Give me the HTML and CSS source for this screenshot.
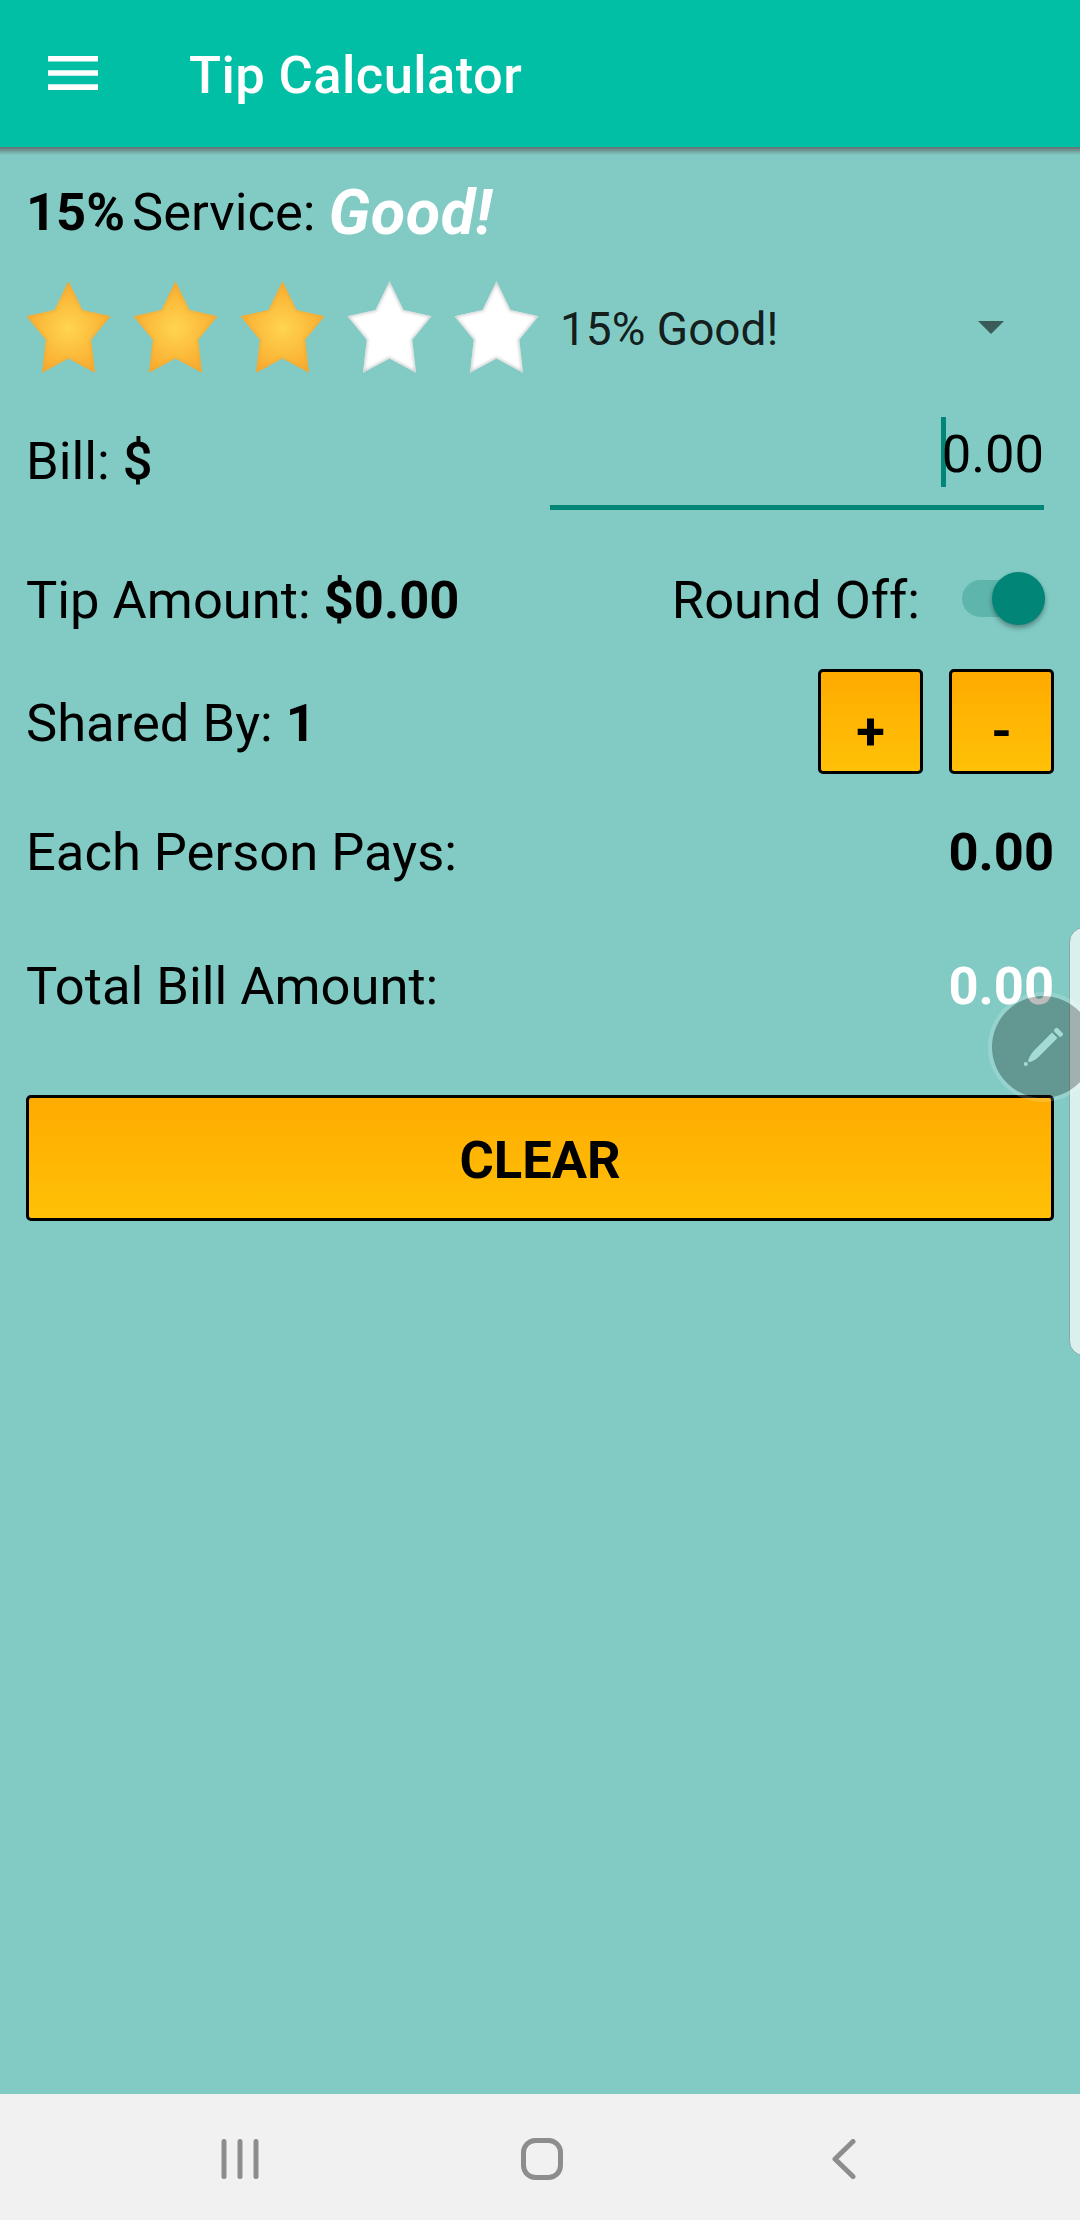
FILE: index.html
```html
<!DOCTYPE html>
<html lang="en">
<head>
<meta charset="utf-8">
<title>Tip Calculator</title>
<link rel="stylesheet" href="styles.css">
</head>
<body>
<div class="app">
  <header class="toolbar">
    <svg class="menu-icon" width="50" height="34" viewBox="0 0 50 34" fill="#fff"><path d="M0 0h50v5.5H0zM0 14.2h50v5.5H0zM0 28.3h50v5.7H0z"/></svg>
    <h1 class="title">Tip Calculator</h1>
  </header>
  <main class="content">
    <div class="row row-service">
      <b class="percent">15%</b><span class="service">Service:</span><em class="quality">Good!</em>
    </div>
    <div class="row row-rating">
      <svg class="stars" width="524" height="110" viewBox="0 0 524 110">
        <defs>
          <radialGradient id="gold" gradientUnits="userSpaceOnUse" cx="42.5" cy="47" r="50"><stop offset="0" stop-color="#ffd54f"/><stop offset="1" stop-color="#f9a72c"/></radialGradient>
          <path id="star" d="M42.5 0 56.5 28.7 84.5 35 65.2 58.5 69 91.5 42.5 77.3 16 91.5 19.8 58.5.5 35 28.5 28.7z"/>
          <clipPath id="star-clip"><use href="#star"/></clipPath>
          <filter id="soft"><feGaussianBlur stdDeviation="1.6"/></filter>
          <g id="empty"><use href="#star" fill="#fff"/><g clip-path="url(#star-clip)"><use href="#star" fill="none" stroke="#c4c4c4" stroke-width="2.2" filter="url(#soft)"/></g></g>
          <g id="full"><use href="#star" fill="url(#gold)"/><g clip-path="url(#star-clip)"><use href="#star" fill="none" stroke="#e3a83c" stroke-width="1.6" filter="url(#soft)"/></g></g>
        </defs>
        <g transform="translate(0 9.3)">
          <use href="#full"/><use href="#full" x="107"/><use href="#full" x="214"/><use href="#empty" x="321"/><use href="#empty" x="428"/>
        </g>
      </svg>
      <div class="spinner"><span>15% Good!</span><svg width="26" height="13" viewBox="0 0 26 13"><path d="M0 0h26L13 13z"/></svg></div>
    </div>
    <div class="row row-bill">
      <span class="bill-label">Bill: <span class="currency">$</span></span>
      <div class="field"><i class="caret"></i><span>0.00</span></div>
    </div>
    <div class="row row-tip">
      <span>Tip Amount: <b>$0.00</b></span>
      <div class="round"><span>Round Off:</span><span class="switch"><i class="thumb"></i></span></div>
    </div>
    <div class="row row-shared">
      <span class="shared-label">Shared By: <b>1</b></span>
      <div class="steppers"><button class="btn step">+</button><button class="btn step">-</button></div>
    </div>
    <div class="row row-each"><span>Each Person Pays:</span><b>0.00</b></div>
    <div class="row row-total"><span>Total Bill Amount:</span><b class="total">0.00</b></div>
    <button class="btn clear">CLEAR</button>
  </main>
  <nav class="navbar">
    <svg class="nav-recents" width="38" height="40" viewBox="0 0 38 40"><path d="M3 2.5v35M19 2.5v35M35 2.5v35"/></svg>
    <svg class="nav-home" width="42" height="42" viewBox="0 0 42 42"><rect x="2.5" y="2.5" width="37" height="37" rx="12"/></svg>
    <svg class="nav-back" width="24" height="40" viewBox="0 0 24 40"><path d="M21 2.5 3 20l18 17.5"/></svg>
  </nav>
  <div class="edge-panel"></div>
  <div class="pen-button">
    <svg width="40" height="40" viewBox="0 0 40 40" fill="#a5dbd5"><path d="M29 5.500 34.500 11 17 28.500C12.500 33 8 35.500 5.500 35 4.500 33 7.500 27 12 22.500z"/><rect x="30.500" y="2.800" width="10" height="5" rx="2" transform="rotate(45 35.500 5.300)"/><circle cx="2.800" cy="37" r="2"/></svg>
  </div>
</div>
</body>
</html>
```
FILE: styles.css
```css
* { box-sizing: border-box; }
body { margin: 0; font-family: Roboto, sans-serif; font-size: 52.5px; line-height: 62px; color: #000; }
.app { position: relative; display: flex; flex-direction: column; width: 1080px; height: 2220px; overflow: hidden; background: #81cbc4; }
.toolbar { position: relative; display: flex; align-items: center; gap: 91px; height: 147px; padding: 0 48px; background: #00bfa5; }
.toolbar::after { content: ""; position: absolute; left: 0; right: 0; top: 100%; height: 8px; background: linear-gradient(rgba(85,75,75,.7), rgba(85,75,75,0)); }
.menu-icon { margin-bottom: 1px; }
.title { margin: 3px 0 0; font-size: 52.5px; font-weight: 500; letter-spacing: .42px; color: #fff; }
.content { flex: 1; padding: 0 26px; }
.row { display: flex; align-items: center; justify-content: space-between; white-space: nowrap; }
.row-service { align-items: flex-start; justify-content: flex-start; height: 125px; padding-top: 34px; }
.service { margin-left: 7px; }
.quality { margin: 1px 0 0 13px; font-size: 63px; font-weight: 700; letter-spacing: .5px; color: #fff; }
.row-rating { height: 110px; }
.spinner { display: flex; flex: 1; align-items: center; justify-content: space-between; padding: 4px 50px 0 10px; font-size: 46px; color: rgba(0,0,0,.87); }
.spinner svg { margin-bottom: 4px; fill: rgba(0,0,0,.55); }
.row-bill { height: 158px; }
.currency { font-weight: 500; }
.field { display: flex; align-items: center; justify-content: flex-end; width: 494px; height: 98px; margin-right: 10px; padding-bottom: 9px; border-bottom: 5px solid #008577; }
.caret { width: 5px; height: 70px; margin: 0 -4px 4px 0; background: #008577; }
.row-tip { height: 120px; }
.round { display: flex; align-items: center; gap: 42px; }
.switch { display: flex; align-items: center; justify-content: flex-end; width: 83px; height: 37px; margin: 0 9px 3px 0; border-radius: 19px; background: #5eb5ac; }
.thumb { width: 53px; height: 53px; border-radius: 50%; background: #008577; box-shadow: 0 3px 5px rgba(0,0,0,.35); }
.row-shared { height: 123px; }
.shared-label { margin-top: 3px; }
.steppers { display: flex; gap: 26px; }
.btn { border: 3px solid #000; border-radius: 5px; background: linear-gradient(#ffab00, #ffc107); font: 700 52.5px/62px Roboto, sans-serif; color: #000; }
.step { width: 105px; height: 105px; padding: 19px 0 0; }
.row-each { height: 138px; }
.row-total { height: 130px; }
.total { color: #fff; }
.clear { display: block; width: 100%; height: 126px; margin-top: 44px; padding: 3px 0 0; }
.navbar { display: flex; align-items: center; justify-content: space-between; height: 126px; padding: 4px 224px 0 221px; background: #f1f1f1; }
.navbar svg { fill: none; stroke: #8d8d8d; stroke-width: 5; stroke-linecap: round; stroke-linejoin: round; }
.nav-home { margin-right: 7px; }
.edge-panel { position: absolute; left: 1069px; top: 927px; width: 30px; height: 429px; border: 1px solid #8aa9a6; border-radius: 15px; background: rgba(255,255,255,.7); }
.pen-button { position: absolute; left: 988px; top: 992px; width: 110px; height: 110px; padding: 31px; border: 4px solid rgba(255,255,255,.17); border-radius: 50%; background: rgba(25,25,25,.29) padding-box; }
.pen-button svg { display: block; }
```
